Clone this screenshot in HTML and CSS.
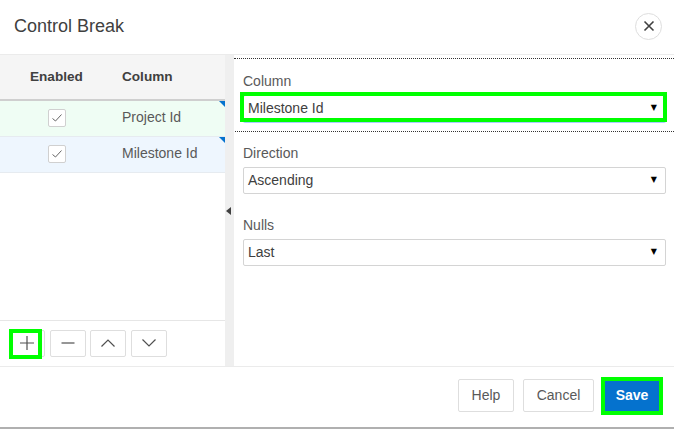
FILE: index.html
```html
<!DOCTYPE html>
<html lang="en">
<head>
<meta charset="utf-8">
<title>Control Break</title>
<link rel="stylesheet" href="styles.css">
</head>
<body>
<div class="dialog">
  <header class="title-bar">
    <h1 class="title">Control Break</h1>
    <button class="close" aria-label="Close">
      <svg width="12" height="12" viewBox="0 0 12 12"><path d="M1.5 1.5L10.5 10.5M10.5 1.5L1.5 10.5" stroke="#404040" stroke-width="1.6" fill="none"/></svg>
    </button>
  </header>
  <main class="body">
    <section class="left">
      <div class="grid-head">
        <div class="col-enabled">Enabled</div>
        <div class="col-name">Column</div>
      </div>
      <div class="grid-row green">
        <div class="col-enabled"><span class="check"><svg width="12" height="10" viewBox="0 0 12 10"><path d="M1.5 5.5L4.5 8L10.5 1.5" stroke="#666" stroke-width="1" fill="none"/></svg></span></div>
        <div class="col-name">Project Id</div>
      </div>
      <div class="grid-row blue">
        <div class="col-enabled"><span class="check"><svg width="12" height="10" viewBox="0 0 12 10"><path d="M1.5 5.5L4.5 8L10.5 1.5" stroke="#666" stroke-width="1" fill="none"/></svg></span></div>
        <div class="col-name">Milestone Id</div>
      </div>
      <div class="spacer"></div>
      <div class="toolbar">
        <button class="tool hl" aria-label="Add"><svg width="16" height="16" viewBox="0 0 16 16"><path d="M8 1V15M1 8H15" stroke="#505050" stroke-width="1.2" fill="none"/></svg></button>
        <button class="tool" aria-label="Remove"><svg width="14" height="14" viewBox="0 0 14 14"><path d="M0.5 7H13.5" stroke="#505050" stroke-width="1.2" fill="none"/></svg></button>
        <button class="tool" aria-label="Up"><svg width="14" height="10" viewBox="0 0 14 10"><path d="M0.5 8.5L7 2L13.5 8.5" stroke="#505050" stroke-width="1.2" fill="none"/></svg></button>
        <button class="tool last" aria-label="Down"><svg width="14" height="10" viewBox="0 0 14 10"><path d="M0.5 1.5L7 8L13.5 1.5" stroke="#505050" stroke-width="1.2" fill="none"/></svg></button>
      </div>
    </section>
    <div class="splitter"><span class="split-arrow"></span></div>
    <section class="right">
      <div class="field">
        <label class="label">Column</label>
        <div class="select hl-select"><span>Milestone Id</span><span class="arrow">▼</span></div>
      </div>
      <div class="field divided">
        <label class="label">Direction</label>
        <div class="select"><span>Ascending</span><span class="arrow">▼</span></div>
      </div>
      <div class="field">
        <label class="label">Nulls</label>
        <div class="select"><span>Last</span><span class="arrow">▼</span></div>
      </div>
    </section>
  </main>
  <footer class="footer">
    <button class="btn help">Help</button>
    <button class="btn cancel">Cancel</button>
    <button class="btn save">Save</button>
  </footer>
</div>
</body>
</html>
```
FILE: styles.css
```css
*, *::before, *::after { box-sizing: border-box; }
html, body { margin: 0; height: 100%; }
body { background: #fff; font-family: "Liberation Sans", Arial, sans-serif; color: #404040; overflow: hidden; }
.dialog { width: 674px; height: 429px; display: flex; flex-direction: column; border-bottom: 2px solid #b0b0b0; }
.title-bar { height: 55px; flex: none; display: flex; align-items: center; justify-content: space-between; padding: 0 12px 2px 14px; border-bottom: 1px solid #ebebeb; }
.title { margin: 0; font-size: 18px; font-weight: 400; color: #404040; }
.close { width: 27px; height: 27px; border-radius: 50%; border: 1px solid #dedede; background: #fff; padding: 0; display: flex; align-items: center; justify-content: center; }
.body { flex: 1; display: flex; min-height: 0; }
.left { width: 225px; flex: none; display: flex; flex-direction: column; }
.grid-head { height: 46px; flex: none; display: flex; align-items: center; background: #f5f5f5; border-bottom: 2px solid #cfcfcf; font-size: 13.6px; font-weight: 700; padding-bottom: 2px; }
.col-enabled { width: 122px; padding-left: 30px; flex: none; }
.grid-row .col-enabled { padding-left: 48px; display: flex; }
.grid-row { height: 36px; flex: none; display: flex; align-items: center; font-size: 14px; color: #595959; border-bottom: 1px solid #e6ebf0; position: relative; padding-bottom: 3px; }
.grid-row .check { margin-top: 2px; }
.grid-row::after { content: ""; position: absolute; top: 0; right: 0; border-top: 6px solid #0572ce; border-left: 6px solid transparent; }
.green { background: #effdf4; }
.blue { background: #eef6fe; }
.check { width: 18px; height: 18px; border: 1px solid #d0d0d0; border-radius: 2px; background: #fff; display: flex; align-items: center; justify-content: center; }
.spacer { flex: 1; }
.toolbar { height: 46px; flex: none; border-top: 1px solid #e6e6e6; display: flex; gap: 4px; align-items: center; padding: 0 0 1px 9px; }
.tool { width: 36px; height: 27px; padding: 0; background: #fff; border: 1px solid #dedede; border-radius: 2px; display: flex; align-items: center; justify-content: center; position: relative; }
.tool.hl { margin-right: 1px; }
.tool.last { margin-left: 1px; }
.tool.hl::after { content: ""; position: absolute; left: -1px; top: -2px; width: 33px; height: 30px; border: 4px solid #00ff00; }
.splitter { width: 9px; flex: none; background: #efefef; display: flex; align-items: center; }
.split-arrow { border-right: 5px solid #404040; border-top: 4px solid transparent; border-bottom: 4px solid transparent; margin-left: 1px; margin-top: 1px; }
.right { flex: 1; border-top: 1px dotted #333; margin-top: 3px; padding: 13px 8px 0 9px; display: flex; flex-direction: column; gap: 22px; }
.field { display: flex; flex-direction: column; position: relative; }
.divided::before { content: ""; position: absolute; left: -8px; right: -8px; top: -13px; border-top: 1px dotted #333; }
.label { font-size: 14px; color: #595959; line-height: 18px; margin-bottom: 5px; }
.select { height: 27px; border: 1px solid #d4d4d4; border-radius: 2px; background: #fff; font-size: 14px; color: #404040; display: flex; align-items: center; justify-content: space-between; padding: 0 8px 2px 4px; position: relative; }
.hl-select { border-color: #a9cff0; box-shadow: 0 1px 0 #a9ccff; }
.hl-select::after { content: ""; position: absolute; left: -4px; right: -2px; top: -4px; bottom: -1px; border: 4px solid #00ff00; }
.arrow { font-size: 8px; color: #000; font-family: "DejaVu Sans", sans-serif; }
.footer { height: 61px; flex: none; border-top: 1px solid #ebebeb; display: flex; justify-content: flex-end; align-items: center; gap: 9px; padding: 0 11px 3px 0; }
.btn { height: 33px; background: #fff; border: 1px solid #dedede; border-radius: 2px; padding: 0 0 1px; font: 14px "Liberation Sans", Arial, sans-serif; color: #595959; }
.help { width: 56px; }
.cancel { width: 71px; margin-right: -2px; }
.save { background: #0572ce; color: #fff; font-weight: 700; border: 4px solid #00ff00; border-radius: 0; height: 38px; width: 62px; }
```
